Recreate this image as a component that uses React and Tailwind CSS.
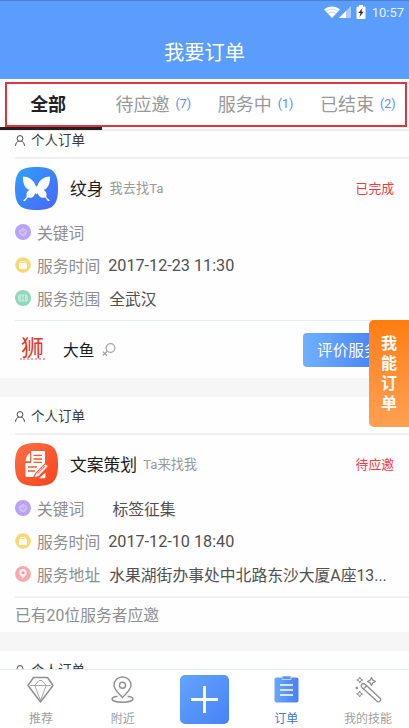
import React from 'react';

const tabs = [
  { label: '全部', active: true },
  { label: '待应邀', count: '(7)' },
  { label: '服务中', count: '(1)' },
  { label: '已结束', count: '(2)' }
];

const StatusBar = () => (
  <div className="flex h-[23px] items-center justify-end border-t border-[#4a82cc] pr-[5px] text-white">
    <svg className="h-3 w-4" viewBox="0 0 16 12" fill="none">
      <path d="M0 3.6C4.5-.6 11.500-.6 16 3.600L8 12z" fill="#fff" />
      <path d="M2 5.400c3.500-2.900 8.500-2.900 12 0M4 7.700c2.400-2 5.600-2 8 0" stroke="#8fbdfd" strokeWidth=".6" />
    </svg>
    <svg className="-ml-px h-3 w-3" viewBox="0 0 12 12">
      <path d="M0 12L12 0v12z" fill="#a9cbfe" />
      <path d="M0 12L7 5v7z" fill="#fff" />
    </svg>
    <svg className="ml-[5px] h-[14px] w-[10px]" viewBox="0 0 10 14">
      <path d="M3 0h4v1.500h1.500q1 0 1 1V13q0 1-1 1h-7q-1 0-1-1V2.500q0-1 1-1H3z" fill="#fff" />
      <path d="M6.500 3L2.300 8h2.200L3.500 12 7.700 6.800H5.500z" fill="#333" />
    </svg>
    <span className="ml-[6px] text-[13px] leading-none text-[#eaf3ff]">10:57</span>
  </div>
);

const PersonIcon = () => (
  <svg className="h-[11px] w-[10px]" viewBox="0 0 10 11" fill="none" stroke="#444" strokeWidth="1">
    <circle cx="5" cy="3.500" r="2.900" />
    <path d="M.5 10.800c.2-2.600 1.500-4.300 3.200-4.700M9.500 10.800C9.300 8.200 8 6.500 6.300 6.100" />
  </svg>
);

const ButterflyIcon = () => (
  <svg className="h-[43px] w-[43px]" viewBox="0 0 43 43">
    <defs>
      <linearGradient id="blueTile" x1="0" y1="0" x2="1" y2="1">
        <stop offset="0" stopColor="#2fa0ff" />
        <stop offset="1" stopColor="#4a66f5" />
      </linearGradient>
    </defs>
    <path d="M21.500 0C37 0 43 4 43 21.500S37 43 21.500 43 0 39 0 21.500 6 0 21.500 0z" fill="url(#blueTile)" />
    <path
      d="M8 9.500c5 0 10.500 3 12.300 8.500l1.200 2 1.200-2c1.800-5.500 7.300-8.500 12.300-8.500.2 4-.6 9.500-4 12.200-1 .8-1.600 1.100-2.600 1.300 2.500 1 3.600 3 3 5.500-.3 1.400.3 2.600 1.800 3.500.9.600 1.700 1.400 1.200 2-.8.700-2.200-.6-3.200-2.200-.9-1.600-2-1.400-3.200-1-2.500.3-4.300-1.700-5.300-4.800l-1.200 1.500-1.200-1.500c-1 3.100-2.800 5.100-5.300 4.800-1.200-.4-2.300-.6-3.200 1-1 1.600-2.400 2.900-3.200 2.200-.5-.6.300-1.400 1.200-2 1.500-.9 2.100-2.100 1.800-3.500-.6-2.500.5-4.500 3-5.500-1-.2-1.600-.5-2.600-1.300C8.600 19 7.800 13.500 8 9.500z"
      fill="#fff"
    />
  </svg>
);

const CopywritingIcon = () => (
  <svg className="h-[43px] w-[43px]" viewBox="0 0 43 43">
    <defs>
      <linearGradient id="orangeTile" x1="0" y1="0" x2="1" y2="1">
        <stop offset="0" stopColor="#ff7043" />
        <stop offset="1" stopColor="#f4431f" />
      </linearGradient>
    </defs>
    <path d="M21.500 0C37 0 43 4 43 21.500S37 43 21.500 43 0 39 0 21.500 6 0 21.500 0z" fill="url(#orangeTile)" />
    <path d="M16 8h13q1 0 1 1v13l-6 6H17q-1 0-1-1z" fill="#fff" />
    <path d="M15.300 9.500v8.800h-4.800c0-3.500 2-7 4.800-8.800z" fill="#fff" />
    <path d="M10.500 20H26v3.500L18 34h-6q-1.500 0-1.500-1.500z" fill="#fff" />
    <path d="M18.500 12.300H27M18.500 16H27M18.500 19.300H27M13 24h9M13 28h7" stroke="#f75a34" strokeWidth="1.300" />
    <path d="M15.800 9v10.200H10" fill="none" stroke="#f75a34" strokeWidth="1" />
    <path d="M30.500 20.500l3 2.500-9.500 10.300-5 2 1.500-4.800z" fill="#fff" stroke="#f75a34" strokeWidth="1.100" />
    <path d="M22 31.500l8-8.500" stroke="#f75a34" strokeWidth=".9" />
    <path d="M24 35.200l6.500-5.500v4q0 1.500-1.500 1.500z" fill="#fff" />
  </svg>
);

const rowIcons = {
  keyword: (
    <svg className="h-4 w-4" viewBox="0 0 16 16" fill="none">
      <circle cx="8" cy="8" r="8" fill="#baa2f5" />
      <path d="M4.500 6.500l3.500-2 3.500 2-.6 3.800L8 12l-2.900-1.700z" fill="#cbb9f8" stroke="#d9ccfa" strokeWidth=".8" />
      <path d="M6 7.800l1.700 1.500L10.500 6.500" stroke="#b79ef2" />
    </svg>
  ),
  time: (
    <svg className="h-4 w-4" viewBox="0 0 16 16" fill="none">
      <circle cx="8" cy="8" r="7.800" fill="#f7d977" />
      <rect x="4" y="6" width="8" height="6" rx="1" fill="#fffaf0" />
      <path d="M5.800 6V4.500h4.400V6" stroke="#fff5d9" />
    </svg>
  ),
  range: (
    <svg className="h-4 w-4" viewBox="0 0 16 16" fill="none">
      <circle cx="8" cy="8" r="8" fill="#8fd8bd" />
      <rect x="3.800" y="5" width="8.400" height="6" rx=".8" fill="#b9e8d8" stroke="#d5f2e8" strokeWidth=".9" />
      <path d="M6.500 5v6M9.500 5v6M6.500 8h3" stroke="#90d6bd" strokeWidth=".8" />
    </svg>
  ),
  address: (
    <svg className="h-4 w-4" viewBox="0 0 16 16" fill="none">
      <circle cx="8" cy="8" r="7.900" fill="#f9a9a9" />
      <path d="M8 3c2.300 0 3.800 1.600 3.800 3.600C11.800 9 9.500 10.700 8 13 6.500 10.700 4.200 9 4.200 6.600 4.200 4.600 5.700 3 8 3z" fill="#fff1f0" />
      <circle cx="8" cy="6.800" r="1.500" fill="#f59595" />
    </svg>
  )
};

const SectionHeader = () => (
  <div className="ml-[15px] flex h-[38px] items-center border-b-2 border-[#f0f0f0] pt-[2px]">
    <PersonIcon />
    <span className="ml-[6px] pt-[2px] text-[13.500px] leading-none text-[#3a3a3a]">个人订单</span>
  </div>
);

const OrderTitle = ({ icon, title, mode, status }) => (
  <div className="flex h-[57px] items-center pl-[15px] pr-[15px] pt-[2px]">
    {icon}
    <span className="ml-3 pt-[2px] text-[16.800px] leading-none text-[#1c1c1c]">{title}</span>
    <span className="ml-[6px] pt-px text-[13.200px] leading-none text-[#999]">{mode}</span>
    <span className="ml-auto pt-[2px] text-[12.800px] leading-none text-[#f23a3c]">{status}</span>
  </div>
);

const InfoRow = ({ icon, label, gap, children }) => (
  <div className="flex h-[33px] items-center pl-[15px] leading-none">
    <span className="-mt-px">{rowIcons[icon]}</span>
    <span className="ml-[6px] pt-[2px] text-[15.800px] text-[#8e8e8e]">{label}</span>
    <span className={`${gap} whitespace-nowrap pt-[2px] text-[15.800px] text-[#505050]`}>{children}</span>
  </div>
);

const DiamondIcon = () => (
  <svg className="h-[27px] w-[27px]" viewBox="0 0 27 27" fill="none" stroke="#909090" strokeLinejoin="round">
    <path d="M6.500 1.500h14L26 9.500 13.500 26 1 9.500z" strokeWidth="1.500" />
    <path d="M3.500 9.500h4.300l4.200-5h3l4.200 5h4.300M7.800 9.500h11.400M7.800 9.500l5.700 15 5.700-15" strokeWidth=".8" />
  </svg>
);

const NearbyIcon = () => (
  <svg className="h-[27px] w-[23px]" viewBox="0 0 23 27" fill="none" stroke="#909090" strokeWidth="1.400">
    <path d="M11.500 21.500C8 17.500 3 13.800 3 9.300 3 4.500 6.800 1 11.500 1S20 4.500 20 9.300c0 4.500-5 8.200-8.500 12.200z" />
    <circle cx="11.500" cy="9.300" r="3" />
    <path d="M6.500 20.300C3 20.800 1 21.800 1 23c0 1.800 4.500 3.200 10.500 3.200S22 24.800 22 23c0-1.200-2-2.200-5.500-2.700" />
  </svg>
);

const OrderIcon = () => (
  <svg className="h-[27px] w-[25px]" viewBox="0 0 25 27">
    <defs>
      <linearGradient id="orderFill" x1="0" y1="0" x2="1" y2="0">
        <stop offset="0" stopColor="#68a6fd" />
        <stop offset="1" stopColor="#4a80f3" />
      </linearGradient>
    </defs>
    <path d="M2.500 1.500h20q2 0 2 2v21q0 2-2 2h-20q-2 0-2-2v-21q0-2 2-2z" fill="url(#orderFill)" />
    <path d="M8 .3v3.200h9V.3" fill="#5b94f8" stroke="#d3e4ff" strokeWidth=".8" />
    <path d="M6 9h13M6 14h13M6 19h13" stroke="#fff" strokeWidth="1.500" />
  </svg>
);

const SkillIcon = () => (
  <svg className="h-[27px] w-[27px]" viewBox="0 0 27 27" fill="none" stroke="#8c8c8c" strokeLinejoin="round">
    <path d="M6.700 8.300q1.700-1.700 3.400 0l15.200 14.200q1 1.200-.4 2.600t-2.600.4L7 11.500q-1.500-1.700-.3-3.200zM8.500 12.900l3.600-3.400" strokeWidth="1.300" />
    <path d="M4.800 1l.9 2.100 2.100.9-2.100.9-.9 2.100-.9-2.100L1.800 4l2.100-.9z" strokeWidth="1" />
    <path d="M16.500 1.500l1.300 2.700 2.700 1.300-2.700 1.300-1.300 2.700-1.300-2.700-2.700-1.300 2.700-1.300z" strokeWidth="1.300" />
    <path d="M4.700 15l.9 2.100 2.100.9-2.100.9-.9 2.100-.9-2.100-2.100-.9 2.100-.9z" strokeWidth="1" />
    <circle cx="1.800" cy="12" r=".9" fill="#8c8c8c" />
  </svg>
);

const NavItem = ({ icon, label, active }) => (
  <div className="flex flex-1 flex-col items-center pt-[6px]">
    {icon}
    <span className={`mt-[10px] whitespace-nowrap text-[12px] leading-none ${active ? 'text-[#3f74d8]' : 'text-[#a0a0a0]'}`}>{label}</span>
  </div>
);

const BottomNav = () => (
  <nav className="flex h-[59px] shrink-0 border-t border-[#e6ebf3] bg-white">
    <NavItem icon={<DiamondIcon />} label="推荐" />
    <NavItem icon={<NearbyIcon />} label="附近" />
    <div className="flex flex-1 justify-center pt-[5px]">
      <div className="flex h-[49px] w-[49px] items-center justify-center rounded-[5px] bg-linear-to-br from-[#64a3fc] to-[#4882f7]">
        <svg className="h-[27px] w-[27px]" viewBox="0 0 27 27" stroke="#fff" strokeWidth="2.800">
          <path d="M13.500 0v27M0 13.500h27" />
        </svg>
      </div>
    </div>
    <NavItem icon={<OrderIcon />} label="订单" active />
    <NavItem icon={<SkillIcon />} label="我的技能" />
  </nav>
);

const App = () => {
  return (
    <div className="relative flex h-[728px] w-[409px] flex-col overflow-hidden bg-[#fefefe] font-[Roboto,'Noto_Sans_CJK_SC',sans-serif]">
      <header className="h-[79px] shrink-0 bg-[#5b9dfd]">
        <StatusBar />
        <h1 className="mt-[20px] text-center text-[20.300px] leading-[20px] text-white">我要订单</h1>
      </header>

      {/* Tabs */}
      <div className="relative flex h-[52px] shrink-0 border-b-2 border-[#ececee] bg-white">
        {tabs.map((tab) => (
          <div key={tab.label} className="relative flex flex-1 items-center justify-center leading-none">
            <span className={`pt-[2px] text-[18px] ${tab.active ? 'mr-[6px] font-bold text-[#222]' : 'text-[#999]'}`}>{tab.label}</span>
            {tab.count && <span className="ml-[6px] pt-px text-[12.500px] text-[#5b8cf0]">{tab.count}</span>}
            {tab.active && <div className="absolute bottom-[-1px] left-0 h-[3px] w-full bg-[#222]" />}
          </div>
        ))}
        <div className="absolute left-[5px] top-[3px] h-[45px] w-[402px] border-2 border-[#e2343c]" />
      </div>

      {/* Order list */}
      <main className="min-h-0 flex-1 overflow-hidden">
        <section className="-mt-[10px]">
          <SectionHeader />
          <OrderTitle icon={<ButterflyIcon />} title="纹身" mode="我去找Ta" status="已完成" />
          <InfoRow icon="keyword" label="关键词" gap="" />
          <InfoRow icon="time" label="服务时间" gap="ml-2">
            <span className="text-[16.200px]">2017-12-23 11:30</span>
          </InfoRow>
          <InfoRow icon="range" label="服务范围" gap="ml-[9px]">全武汉</InfoRow>
          <div className="ml-[15px] mt-[5px] flex h-[58px] items-center border-t border-[#e8edf3]">
            <div className="ml-1 flex h-[27px] w-[27px] flex-col items-center text-[#e5352f]">
              <span className="font-['Noto_Sans_CJK_SC'] text-[23px] leading-[21px]">狮</span>
              <div className="mt-px w-[25px] border-b-2 border-dotted border-[#f0a5a0]" />
            </div>
            <span className="ml-[17px] pt-[2px] text-[15.700px] leading-none text-[#1c1c1c]">大鱼</span>
            <svg className="ml-2 h-[13px] w-[14px]" viewBox="0 0 14 13" fill="none" stroke="#a5a5a5" strokeWidth="1.300">
              <circle cx="8.500" cy="5" r="4.400" />
              <path d="M5.300 8.200L.8 12.500M1 8.700l4 3.800" />
            </svg>
            <button className="ml-auto mr-[5px] h-[34px] w-[101px] whitespace-nowrap rounded-[4px] bg-linear-to-r from-[#70b0ff] to-[#3b72f0] pl-[14px] pt-[2px] text-left text-[15.700px] leading-none text-white">
              评价服务
            </button>
          </div>
        </section>

        <section className="border-t-[19px] border-[#f6f6f6]">
          <SectionHeader />
          <OrderTitle icon={<CopywritingIcon />} title="文案策划" mode="Ta来找我" status="待应邀" />
          <InfoRow icon="keyword" label="关键词" gap="ml-[28px]">标签征集</InfoRow>
          <InfoRow icon="time" label="服务时间" gap="ml-2">
            <span className="text-[16.200px]">2017-12-10 18:40</span>
          </InfoRow>
          <InfoRow icon="address" label="服务地址" gap="ml-[9px]">水果湖街办事处中北路东沙大厦A座13...</InfoRow>
          <div className="ml-[15px] mt-[5px] flex h-[36px] items-center border-t-2 border-[#f0f0f0] pt-[2px] text-[15.800px] leading-none text-[#8e8e8e]">
            已有20位服务者应邀
          </div>
        </section>

        <section className="border-t-[19px] border-[#f6f6f6]">
          <SectionHeader />
        </section>
      </main>

      <BottomNav />

      {/* Floating switch to skill orders */}
      <div className="absolute right-0 top-[320px] flex h-[107px] w-[40px] flex-col items-center justify-center rounded-l-[5px] bg-linear-to-b from-[#ff7d0a] to-[#ffa050] pt-px text-[16px] font-bold leading-[20px] text-white">
        <span>我</span>
        <span>能</span>
        <span>订</span>
        <span>单</span>
      </div>
    </div>
  );
};

export default App;
